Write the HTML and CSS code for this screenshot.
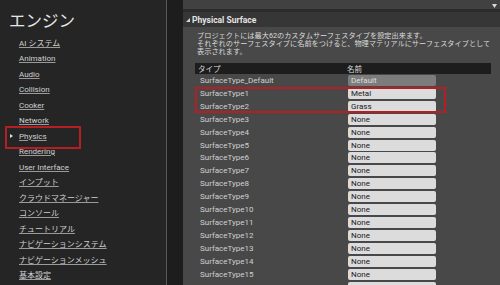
FILE: index.html
```html
<!DOCTYPE html>
<html lang="ja">
<head>
    <meta charset="UTF-8">
    <title>エンジン - Physics</title>
    <link rel="stylesheet" href="styles.css">
</head>
<body>
    <div class="app">
        <aside class="sidebar">
            <h1>エンジン</h1>
            <ul class="nav">
                <li><a href="#">AI システム</a></li>
                <li><a href="#">Animation</a></li>
                <li><a href="#">Audio</a></li>
                <li><a href="#">Collision</a></li>
                <li><a href="#">Cooker</a></li>
                <li><a href="#">Network</a></li>
                <li class="current"><a href="#">Physics</a></li>
                <li><a href="#">Rendering</a></li>
                <li><a href="#">User Interface</a></li>
                <li><a href="#">インプット</a></li>
                <li><a href="#">クラウドマネージャー</a></li>
                <li><a href="#">コンソール</a></li>
                <li><a href="#">チュートリアル</a></li>
                <li><a href="#">ナビゲーションシステム</a></li>
                <li><a href="#">ナビゲーションメッシュ</a></li>
                <li><a href="#">基本設定</a></li>
            </ul>
        </aside>
        <div class="gutter"></div>
        <main class="panel">
            <div class="toolbar">
                <svg width="5" height="4" viewBox="0 0 5 4"><path d="M0 0h5L2.5 4z" fill="#d8d8d8"/></svg>
            </div>
            <div class="section-head">
                <svg width="4" height="4" viewBox="0 0 4 4"><path d="M4 0v4H0z" fill="#d8d8d8"/></svg>
                <span>Physical Surface</span>
            </div>
            <div class="section-body">
                <p class="desc">プロジェクトには最大62のカスタムサーフェスタイプを設定出来ます。<br>それぞれのサーフェスタイプに名前をつけると、物理マテリアルにサーフェスタイプとして<br>表示されます。</p>
                <div class="table">
                    <div class="row head"><span>タイプ</span><span>名前</span></div>
                    <div class="row"><span>SurfaceType_Default</span><span class="field locked">Default</span></div>
                    <div class="group">
                        <div class="row"><span>SurfaceType1</span><span class="field">Metal</span></div>
                        <div class="row"><span>SurfaceType2</span><span class="field">Grass</span></div>
                    </div>
                    <div class="row"><span>SurfaceType3</span><span class="field">None</span></div>
                    <div class="row"><span>SurfaceType4</span><span class="field">None</span></div>
                    <div class="row"><span>SurfaceType5</span><span class="field">None</span></div>
                    <div class="row"><span>SurfaceType6</span><span class="field">None</span></div>
                    <div class="row"><span>SurfaceType7</span><span class="field">None</span></div>
                    <div class="row"><span>SurfaceType8</span><span class="field">None</span></div>
                    <div class="row"><span>SurfaceType9</span><span class="field">None</span></div>
                    <div class="row"><span>SurfaceType10</span><span class="field">None</span></div>
                    <div class="row"><span>SurfaceType11</span><span class="field">None</span></div>
                    <div class="row"><span>SurfaceType12</span><span class="field">None</span></div>
                    <div class="row"><span>SurfaceType13</span><span class="field">None</span></div>
                    <div class="row"><span>SurfaceType14</span><span class="field">None</span></div>
                    <div class="row"><span>SurfaceType15</span><span class="field">None</span></div>
                    <div class="row"><span></span><span class="field"></span></div>
                </div>
            </div>
        </main>
    </div>
</body>
</html>
```

FILE: styles.css
```css
* {
    box-sizing: border-box;
}
html, body {
    margin: 0;
    padding: 0;
}
body {
    width: 500px;
    height: 285px;
    overflow: hidden;
    background: #242424;
    font-family: Roboto, "Noto Sans CJK JP", sans-serif;
    color: #d2d2d2;
}
.app {
    display: flex;
    height: 285px;
}
.sidebar {
    width: 167px;
    flex: none;
    padding-top: 10px;
    background: #252525;
    border-right: 1px solid #585858;
}
.sidebar h1 {
    margin: 0 0 0 9px;
    font-size: 16.5px;
    font-weight: 400;
    line-height: 24px;
    color: #e6e6e6;
}
.nav {
    list-style: none;
    margin: 0;
    padding: 1.5px 0 0 0;
}
.nav li {
    position: relative;
    height: 15.5px;
    padding-left: 19px;
    font-size: 8px;
    line-height: 15.5px;
}
.nav a {
    color: #d0d0d0;
    text-decoration: underline;
    text-decoration-color: #9a9a9a;
    text-underline-offset: 1px;
}
.nav li.current::before {
    content: "";
    position: absolute;
    left: 10px;
    top: 5.5px;
    border-left: 3px solid #e0e0e0;
    border-top: 2.5px solid transparent;
    border-bottom: 2.5px solid transparent;
}
.nav li.current::after {
    content: "";
    position: absolute;
    left: 5px;
    top: -2.5px;
    width: 72px;
    height: 19px;
    border: 2px solid #b41f24;
}
.gutter {
    width: 16px;
    flex: none;
    background: #1d1d1d;
}
.panel {
    flex: 1;
    background: #484848;
}
.toolbar {
    height: 12px;
    display: flex;
    justify-content: flex-end;
    padding: 4px 3px 0 0;
    background: #414141;
    border-bottom: 3px solid #2b2b2b;
}
.toolbar svg {
    display: block;
}
.section-head {
    height: 15px;
    display: flex;
    align-items: center;
    gap: 2px;
    padding-left: 3px;
    background: #363636;
    font-size: 8.5px;
    font-weight: 700;
    color: #e4e4e4;
}
.section-body {
    padding: 0 0 0 12px;
}
.desc {
    margin: 4.5px 0 7px 2px;
    font-size: 7.2px;
    line-height: 8.3px;
    color: #dadada;
}
.table {
    width: 296px;
}
.row {
    display: grid;
    grid-template-columns: 147px 1fr;
    align-items: center;
    height: 12.95px;
    padding-left: 5px;
    font-size: 8px;
    color: #d0d0d0;
}
.row.head {
    height: 10.5px;
    padding-left: 3px;
    background: #1d1d1d;
    color: #dedede;
    font-size: 7.5px;
}
.row.head span:last-child {
    padding-left: 2px;
}
.field {
    display: block;
    width: 88px;
    height: 11px;
    margin-left: 1px;
    padding-left: 3px;
    line-height: 11px;
    border-radius: 2px;
    background: #dcdcdc;
    color: #1a1a1a;
}
.field.locked {
    background: #7c7c7c;
    color: #dedede;
}
.group {
    position: relative;
}
.group::after {
    content: "";
    position: absolute;
    left: 0;
    top: 0;
    bottom: 0;
    width: 247px;
    border: 2px solid #b41f24;
}
```
